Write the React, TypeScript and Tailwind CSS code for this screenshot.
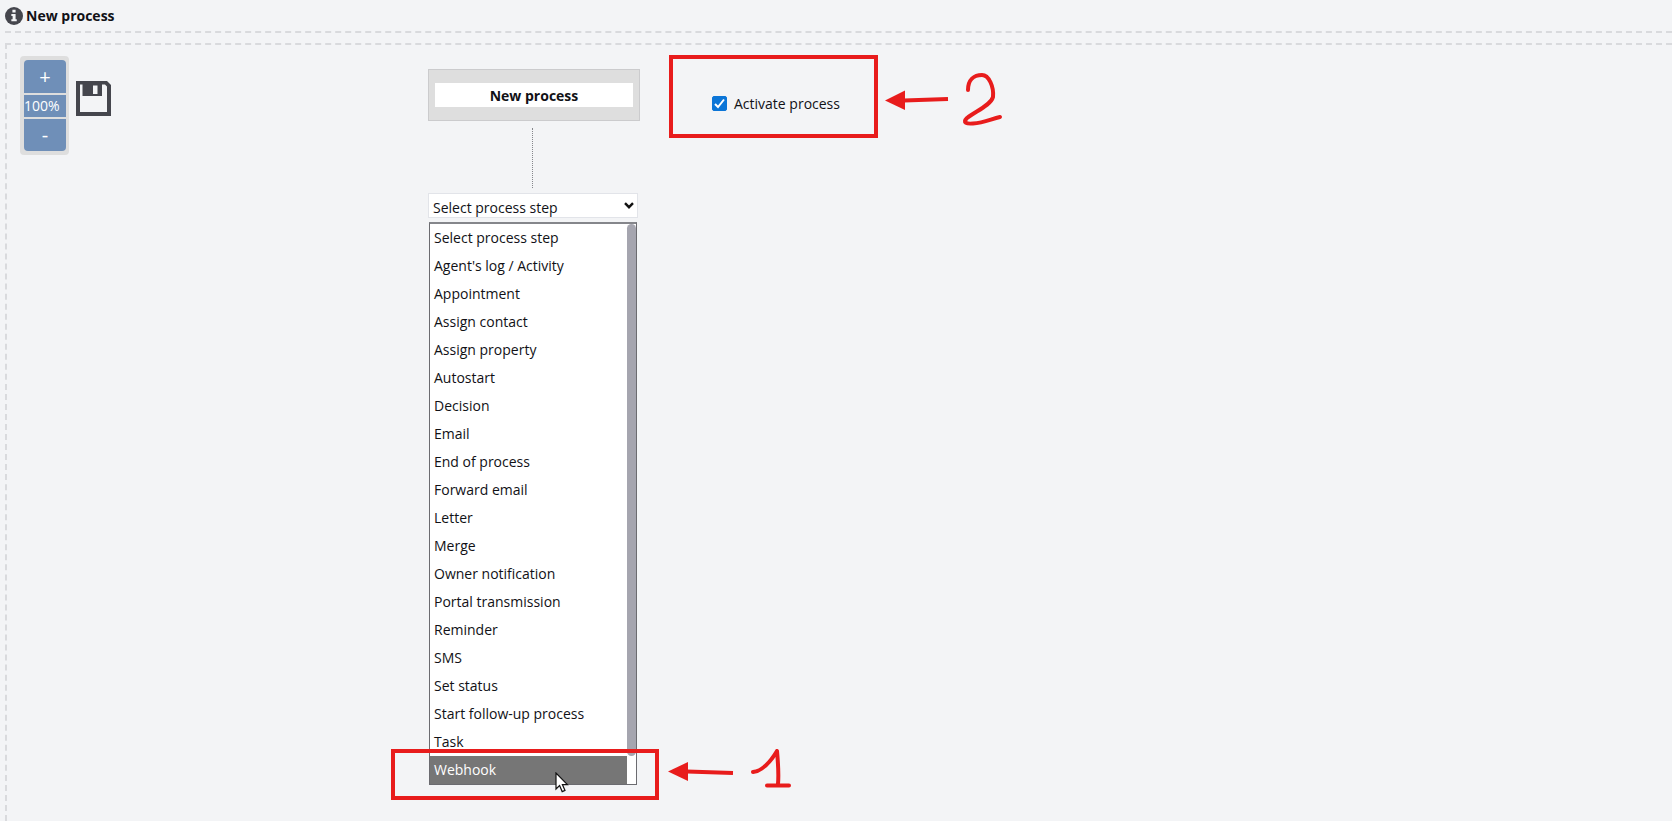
import { useState } from "react";

const steps = [
  "Select process step",
  "Agent's log / Activity",
  "Appointment",
  "Assign contact",
  "Assign property",
  "Autostart",
  "Decision",
  "Email",
  "End of process",
  "Forward email",
  "Letter",
  "Merge",
  "Owner notification",
  "Portal transmission",
  "Reminder",
  "SMS",
  "Set status",
  "Start follow-up process",
  "Task",
  "Webhook",
];

function InfoIcon() {
  return (
    <svg className="size-[18px] shrink-0" viewBox="0 0 17 17" aria-hidden="true">
      <circle cx="8.5" cy="8.5" r="8.5" fill="#45464d" />
      <path
        d="M7 2.7h3v2.5H7zM6 6.6h4v5h1.1v1.9H6v-1.9h1.2V8.4H6z"
        fill="#f3f4f6"
      />
    </svg>
  );
}

function SaveIcon() {
  return (
    <svg className="size-[35px]" viewBox="0 0 35 35" aria-hidden="true">
      <path
        d="M0 0H31L35 4V35H0ZM4 3.5V31H31V5.5L29 3.5H26V15H6.5V3.5ZM17 4.5V13H21.5V4.5Z"
        fill="#45464d"
        fillRule="evenodd"
      />
    </svg>
  );
}

function ZoomControls() {
  const [zoom, setZoom] = useState(100);
  const button =
    "flex items-center justify-center bg-[#6f8fb8] text-xl leading-none text-white";

  return (
    <div className="mt-px flex w-[49px] flex-col gap-0.5 rounded-sm bg-[#dedede] p-1 pr-[3px]">
      <button
        aria-label="Zoom in"
        className={`${button} h-[33px] rounded-t-sm`}
        onClick={() => setZoom(zoom + 10)}
      >
        +
      </button>
      <span className="h-[22px] bg-[#6f8fb8] text-sm leading-[22px] text-white">
        {zoom}%
      </span>
      <button
        aria-label="Zoom out"
        className={`${button} h-8 rounded-b-sm`}
        onClick={() => setZoom(zoom - 10)}
      >
        -
      </button>
    </div>
  );
}

function StepPicker() {
  const [step, setStep] = useState(steps[0]);

  return (
    <div className="w-[210px]">
      <div className="relative">
        <select
          aria-label="Process step"
          value={step}
          onChange={(e) => setStep(e.target.value)}
          className="block h-[25px] w-full appearance-none border border-[#e2e4e9] bg-white px-1 pt-1 text-sm leading-5"
        >
          {steps.map((s) => (
            <option key={s}>{s}</option>
          ))}
        </select>
        <svg
          className="pointer-events-none absolute top-[9px] right-1 h-[7px] w-[10px]"
          viewBox="0 0 10 7"
          aria-hidden="true"
        >
          <path d="M1 1.2L5 5.2L9 1.2" fill="none" stroke="#111" strokeWidth="2.4" />
        </svg>
      </div>

      <div className="relative mx-px mt-1">
        <div className="flex border border-t-2 border-[#6b6b70] border-t-[#85868b] bg-white">
          <ul role="listbox" aria-label="Process steps" className="flex-1">
            {steps.map((s) => (
              <li
                key={s}
                role="option"
                aria-selected={s === "Webhook"}
                onClick={() => setStep(s)}
                className="h-7 px-1 text-sm leading-7 aria-selected:bg-[#767676] aria-selected:text-white"
              >
                {s}
              </li>
            ))}
          </ul>
          <div className="w-[9px] pb-7">
            <div className="h-full rounded-full bg-[#a5a5af]" />
          </div>
        </div>

        <svg
          className="absolute right-[68px] -bottom-2 h-[21px] w-[14px]"
          viewBox="0 0 14 21"
          aria-hidden="true"
        >
          <path
            d="M1 1V17L4.6 13.6L7.2 19.6L10 18.4L7.4 12.6H12.4Z"
            fill="#fff"
            stroke="#111"
            strokeWidth="1.2"
          />
        </svg>

        {/* step 1 callout */}
        <div className="pointer-events-none absolute -bottom-[15px] -left-[38px] h-[51px] w-[268px] border-4 border-[#e81c1c]" />
        <svg
          className="pointer-events-none absolute -bottom-1 left-[239px] h-10 w-[124px]"
          viewBox="0 0 124 40"
          aria-label="1"
        >
          <path d="M0 22.5L20 13V32Z" fill="#e81c1c" />
          <path d="M19 22.5L65 24" stroke="#e81c1c" strokeWidth="4" fill="none" />
          <path
            d="M85 23C94 22 103 12 109 2C110 13 111 24 110 35M99 36.5H121"
            fill="none"
            stroke="#e81c1c"
            strokeWidth="4"
            strokeLinecap="round"
            strokeLinejoin="round"
          />
        </svg>
      </div>
    </div>
  );
}

function ActivateProcess() {
  const [active, setActive] = useState(true);

  return (
    <div className="relative ml-[29px] flex h-[83px] w-[209px] items-center border-4 border-[#e81c1c] pt-3.5 pl-[39px]">
      <label className="flex items-center gap-[7px] text-sm">
        <span className="relative flex">
          <input
            type="checkbox"
            checked={active}
            onChange={(e) => setActive(e.target.checked)}
            className="peer size-[15px] appearance-none rounded-[2px] border border-[#767676] bg-white checked:border-[#0b75d7] checked:bg-[#0b75d7]"
          />
          <svg
            className="pointer-events-none absolute inset-0 hidden size-[15px] peer-checked:block"
            viewBox="0 0 15 15"
            aria-hidden="true"
          >
            <path d="M3 8L6 11L12 3.5" fill="none" stroke="#fff" strokeWidth="2" />
          </svg>
        </span>
        Activate process
      </label>

      {/* step 2 callout */}
      <svg
        className="pointer-events-none absolute top-3 left-[212px] h-[58px] w-[120px]"
        viewBox="0 0 120 58"
        aria-label="2"
      >
        <path d="M0 29.5L20 19.5V39Z" fill="#e81c1c" />
        <path d="M19 29.5L63 28" stroke="#e81c1c" strokeWidth="4" fill="none" />
        <path
          d="M83 19C83 9 89 4 97 4C104 4 109 16 108 26C106 34 91 40 82 47C77 52 82 53 88 52.5C99 52 106 48 115 46"
          fill="none"
          stroke="#e81c1c"
          strokeWidth="4"
          strokeLinecap="round"
          strokeLinejoin="round"
        />
      </svg>
    </div>
  );
}

export default function App() {
  return (
    <div className="flex min-h-screen flex-col overflow-hidden bg-[#f3f4f6] font-['Open_Sans','Noto_Sans',sans-serif] text-[#111116]">
      <header className="ml-[5px] flex h-[33px] items-center gap-[3px] border-b-2 border-dashed border-[#d9dadd]">
        <InfoIcon />
        <h1 className="text-sm font-bold">New process</h1>
      </header>

      <main className="mt-2.5 ml-[5px] flex flex-1 items-start border-t-2 border-l-2 border-dashed border-[#d9dadd] pt-2.5 pl-[13px]">
        <ZoomControls />
        <button aria-label="Save" className="mt-[26px] ml-[7px]">
          <SaveIcon />
        </button>

        <section className="mt-3.5 ml-[317px] w-[212px]">
          <div className="flex h-[52px] items-center border border-[#cbcbcd] bg-[#dedede] px-1.5">
            <input
              aria-label="Process name"
              defaultValue="New process"
              className="h-6 w-full bg-white text-center text-sm font-bold"
            />
          </div>
          <div className="mx-auto mt-[7px] mb-[5px] h-[60px] w-1 border-l border-dotted border-[#85868b]" />
          <StepPicker />
        </section>

        <ActivateProcess />
      </main>
    </div>
  );
}
